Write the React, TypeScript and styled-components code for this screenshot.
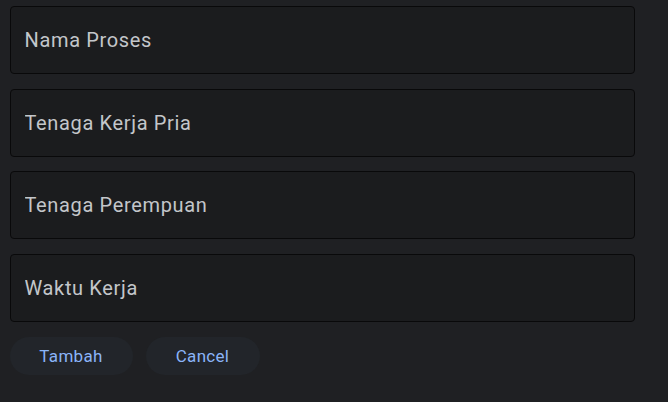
import React from "react";
import styled, { createGlobalStyle } from "styled-components";

const Global = createGlobalStyle`
  html, body {
    margin: 0;
    padding: 0;
    background: #1f2023;
  }
  body {
    font-family: Roboto, "Noto Sans", sans-serif;
  }
`;

const Form = styled.form`
  display: flex;
  flex-direction: column;
  gap: 14.67px;
  width: 625px;
  padding: 6px 0 0 9.5px;
  box-sizing: content-box;
`;

const Field = styled.input`
  box-sizing: border-box;
  height: 68px;
  width: 100%;
  margin: 0;
  padding: 0 14px;
  background: #1b1c1e;
  border: 1px solid #09090a;
  border-radius: 4px;
  color: #c3c6ca;
  font-family: Roboto, sans-serif;
  font-size: 20px;
  letter-spacing: 0.65px;
  outline: none;
  &::placeholder {
    color: #c3c6ca;
    opacity: 1;
  }
`;

const Actions = styled.div`
  display: flex;
  gap: 13px;
  margin-top: 0.33px;
`;

const Button = styled.button<{ $w: number }>`
  height: 38px;
  width: ${(p) => p.$w}px;
  padding: 0;
  border: none;
  border-radius: 19px;
  background: #22252a;
  color: #8ab4f8;
  font-family: Roboto, sans-serif;
  font-size: 17px;
  letter-spacing: 0.3px;
  cursor: pointer;
`;

export default function App() {
  return (
    <>
      <Global />
      <Form onSubmit={(e) => e.preventDefault()}>
        <Field placeholder="Nama Proses" />
        <Field placeholder="Tenaga Kerja Pria" />
        <Field placeholder="Tenaga Perempuan" />
        <Field placeholder="Waktu Kerja" />
        <Actions>
          <Button type="submit" $w={123}>Tambah</Button>
          <Button type="button" $w={114}>Cancel</Button>
        </Actions>
      </Form>
    </>
  );
}
